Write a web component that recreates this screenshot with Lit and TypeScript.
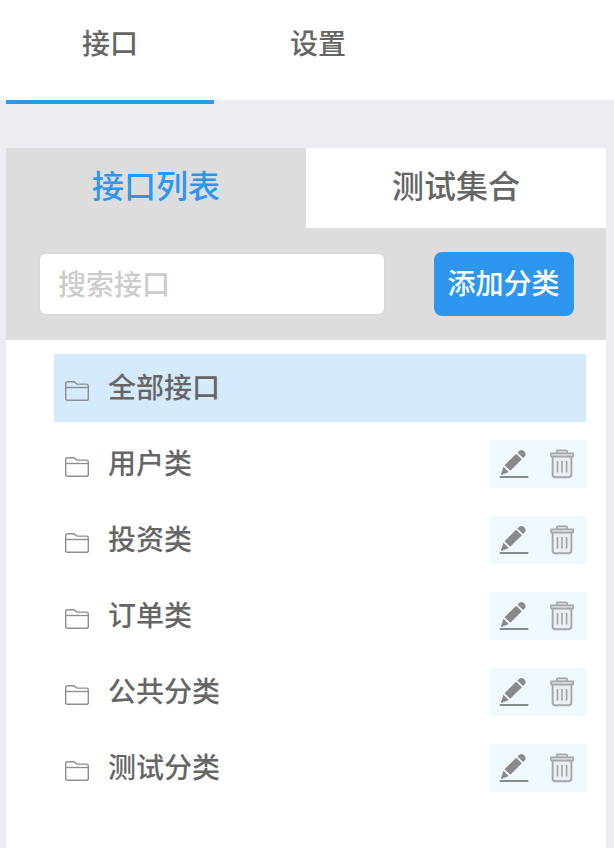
import { LitElement, html, css } from "lit";
import { customElement, property, state } from "lit/decorators.js";
import { classMap } from "lit/directives/class-map.js";

const folderIcon = html`<svg class="folder" width="26" height="22" viewBox="0 0 26 22" fill="none" stroke="#8e8e8e" stroke-width="1.4" stroke-linejoin="round">
  <path d="M1.7 18.5V3.6Q1.7 1.7 3.6 1.7H9.2Q10.2 1.7 11 2.5L11.8 3.3Q12.6 4.1 13.6 4.1H22.4Q24.3 4.1 24.3 6V18.4Q24.3 20.3 22.4 20.3H3.6Q1.7 20.3 1.7 18.5Z" />
  <path d="M1.7 7.5H24.3" />
</svg>`;

const editIcon = html`<svg width="32" height="32" viewBox="0 0 32 32" fill="#8a8a8a">
  <rect x="1.5" y="28" width="29" height="1.9" rx="0.8" />
  <path d="M5.4 18.8L10.8 24.1L3.6 27Q2.7 27.2 3 26.3Z" />
  <path d="M6.6 17.3L18.1 5.7L23.9 11.3L12.2 22.8Z" />
  <path d="M19.4 4.6L21.4 2.8Q23.7 1 26 3.2Q28.6 5.7 27 8.1L25.1 10.1Z" />
</svg>`;

const trashIcon = html`<svg width="32" height="32" viewBox="0 0 32 32" fill="none" stroke="#a6a6a6" stroke-width="1.6" stroke-linejoin="round">
  <path d="M10.8 5.2V3.2Q10.8 2.3 11.7 2.3H20.2Q21.1 2.3 21.1 3.2V5.2" fill="#d8dcde" />
  <path d="M6.6 8.6V26.6Q6.6 29.2 9.2 29.2H22.8Q25.4 29.2 25.4 26.6V8.6" stroke-width="1.9" fill="#e9eff3" />
  <rect x="4.9" y="5.2" width="22.3" height="3.4" rx="0.6" fill="#d3d6d8" />
  <path d="M11.5 13V24.4M16 13V24.4M20.6 13V24.4" stroke-width="1.7" />
</svg>`;

@customElement("category-row")
class CategoryRow extends LitElement {
  @property() label = "";
  @property({ type: Boolean }) active = false;
  @property({ type: Boolean }) editable = false;

  static styles = css`
    :host { display: block; }
    .row {
      display: flex;
      align-items: center;
      box-sizing: border-box;
      height: 68px;
      padding-left: 10px;
    }
    .active { background: #d5eafb; }
    .folder { flex: none; margin-top: 6px; }
    .label { flex: 1; margin-left: 18px; padding-bottom: 4px; line-height: 64px; }
    .actions {
      display: flex;
      align-items: center;
      gap: 16px;
      box-sizing: border-box;
      width: 96px;
      height: 48px;
      padding: 0 8px;
      background: #f0f9ff;
    }
  `;

  render() {
    return html`<div class=${classMap({ row: true, active: this.active })}>
      ${folderIcon}
      <span class="label">${this.label}</span>
      ${this.editable ? html`<div class="actions">${editIcon}${trashIcon}</div>` : null}
    </div>`;
  }
}

@customElement("app-root")
class AppRoot extends LitElement {
  @state() private categories = ["用户类", "投资类", "订单类", "公共分类", "测试分类"];

  static styles = css`
    :host {
      display: flex;
      flex-direction: column;
      height: 100vh;
      overflow: hidden;
      background: #ecedf1;
      color: #666;
      font-family: "Noto Sans CJK SC", sans-serif;
      font-size: 28px;
      font-weight: 500;
    }
    .nav {
      display: flex;
      flex: none;
      height: 104px;
      padding-left: 6px;
      background: linear-gradient(#fff 100px, #ecedf1 100px);
    }
    .nav-item {
      box-sizing: border-box;
      width: 208px;
      text-align: center;
      line-height: 84px;
    }
    .current { border-bottom: 4px solid #2d96ee; }
    .panel {
      flex: 1;
      margin: 44px 8px 0 6px;
      background: #fff;
    }
    .tabs { display: flex; background: #ddd; }
    .tab {
      flex: 1;
      height: 80px;
      line-height: 72px;
      font-size: 32px;
      text-align: center;
      background: #fff;
    }
    .selected { background: #ddd; color: #2d96ee; }
    .tools {
      display: flex;
      justify-content: space-between;
      box-sizing: border-box;
      height: 112px;
      padding: 24px 32px;
      background: #ddd;
    }
    .search {
      box-sizing: border-box;
      width: 348px;
      height: 64px;
      padding: 0 18px 3px;
      border: 2px solid #d9d9d9;
      border-radius: 8px;
      background: #fff;
      color: #666;
      font: inherit;
      outline: none;
    }
    .search::placeholder { color: #ccc; opacity: 1; }
    .add {
      width: 140px;
      height: 64px;
      padding: 0 1px 4px 0;
      border: 0;
      border-radius: 8px;
      background: #2d96ee;
      color: #fff;
      font: inherit;
      line-height: 60px;
    }
    .list {
      display: flex;
      flex-direction: column;
      gap: 8px;
      padding: 14px 20px 0 48px;
    }
  `;

  render() {
    return html`
      <nav class="nav">
        <div class="nav-item current">接口</div>
        <div class="nav-item">设置</div>
      </nav>
      <main class="panel">
        <div class="tabs">
          <div class="tab selected">接口列表</div>
          <div class="tab">测试集合</div>
        </div>
        <div class="tools">
          <input class="search" placeholder="搜索接口" />
          <button class="add">添加分类</button>
        </div>
        <div class="list">
          <category-row label="全部接口" active></category-row>
          ${this.categories.map((c) => html`<category-row label=${c} editable></category-row>`)}
        </div>
      </main>
    `;
  }
}
